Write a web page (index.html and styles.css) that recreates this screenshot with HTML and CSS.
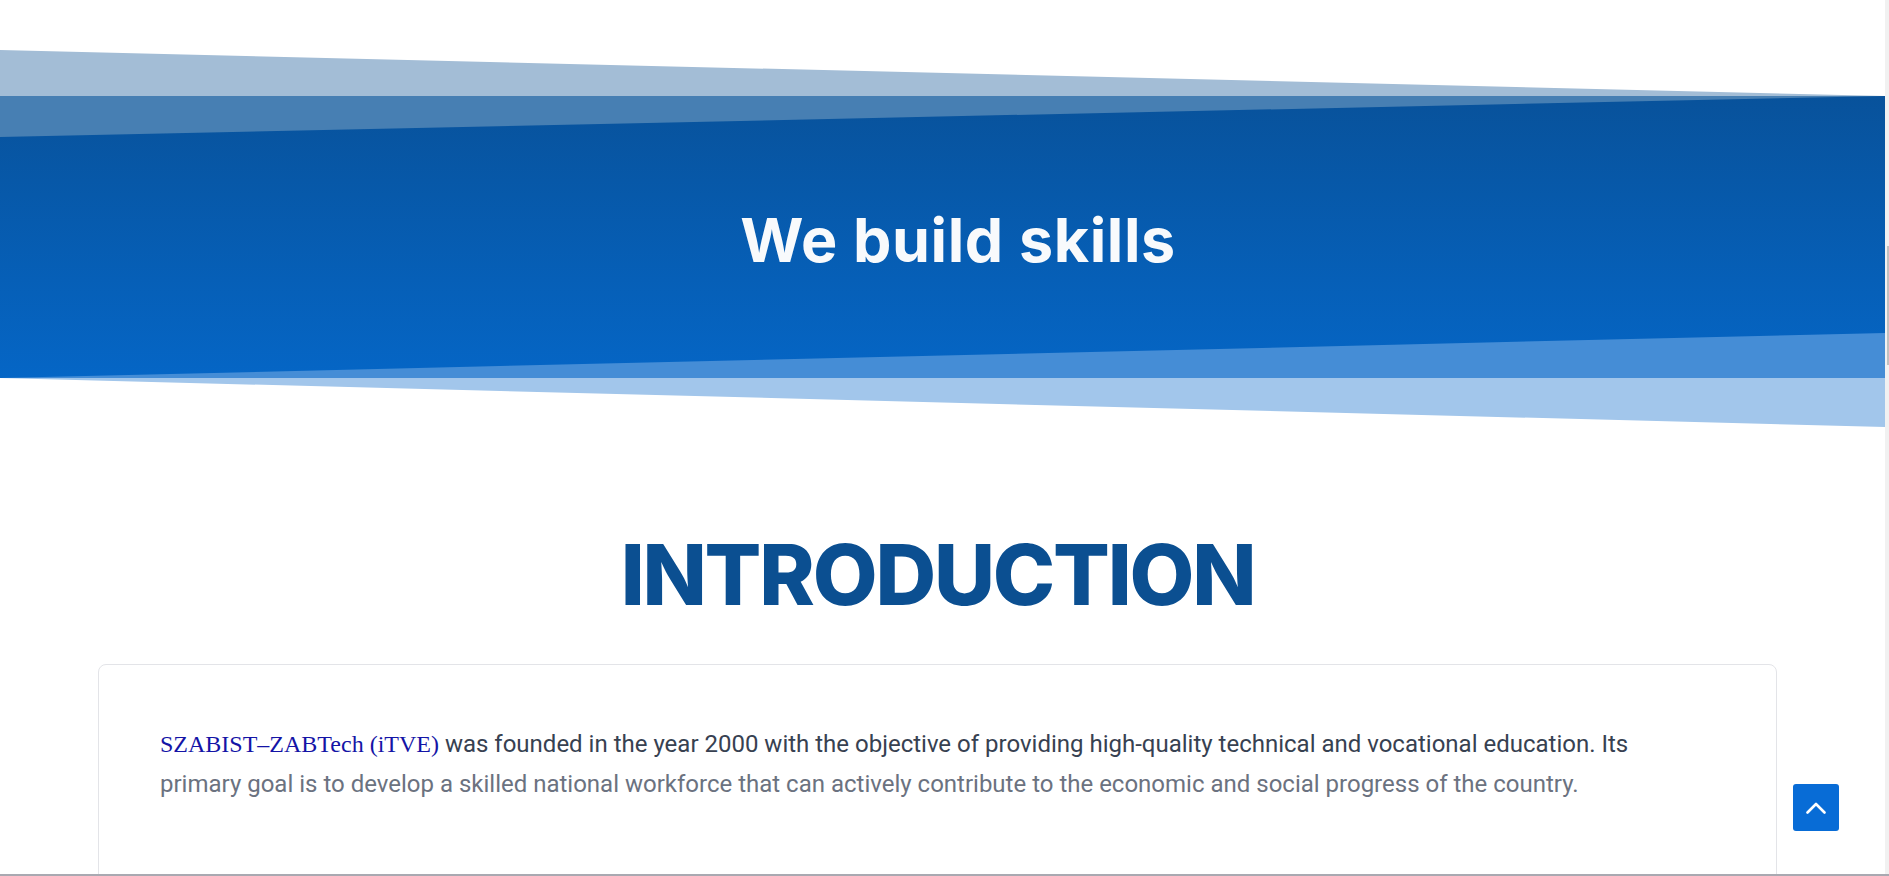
FILE: index.html
```html
<!DOCTYPE html>
<html lang="en">
<head>
<meta charset="utf-8">
<title>We build skills</title>
<link rel="stylesheet" href="styles.css">
</head>
<body>
<div class="page">
  <section class="hero">
    <svg class="divider divider-top" viewBox="0 0 1885 87" preserveAspectRatio="none" aria-hidden="true">
      <polygon points="0,0 1885,46 0,46" fill="#a3bdd6"/>
      <polygon points="0,46 1885,46 0,87" fill="#477fb3"/>
    </svg>
    <h1 class="hero-title">We build skills</h1>
    <svg class="divider divider-bottom" viewBox="0 0 1885 94" preserveAspectRatio="none" aria-hidden="true">
      <polygon points="0,45 1885,0 1885,45" fill="#458dd6"/>
      <polygon points="0,45 1885,45 1885,94" fill="#a2c6eb"/>
    </svg>
  </section>

  <section class="intro">
    <h2 class="intro-title">INTRODUCTION</h2>
    <div class="card">
      <p class="card-text"><span class="brand">SZABIST–ZABTech (iTVE)</span> was founded in the year 2000 with the objective of providing high-quality technical and vocational education. Its primary goal is to develop a skilled national workforce that can actively contribute to the economic and social progress of the country.</p>
    </div>
  </section>
</div>

<a class="to-top" href="#" aria-label="Back to top">
  <svg viewBox="0 0 20 12" width="20" height="12" aria-hidden="true">
    <polyline points="1.5,10.5 10,2 18.5,10.5" fill="none" stroke="#fff" stroke-width="2.6" stroke-linecap="round" stroke-linejoin="round"/>
  </svg>
</a>

<div class="scrollbar" aria-hidden="true"><div class="scrollbar-thumb"></div></div>
<div class="bottom-edge" aria-hidden="true"></div>
</body>
</html>
```

FILE: styles.css
```css
html, body {
  margin: 0;
  padding: 0;
  overflow: hidden;
  background: #ffffff;
}

body {
  font-family: Roboto, "Liberation Sans", Arial, sans-serif;
}

.page {
  margin-right: 4px;
}

.hero {
  position: relative;
  margin-top: 96px;
  height: 282px;
  background: linear-gradient(180deg, #08529b 0%, #0566c6 100%);
  display: flex;
  align-items: center;
  justify-content: center;
  padding-left: 31px;
  box-sizing: border-box;
}

.divider {
  position: absolute;
  left: 0;
  width: 100%;
  display: block;
}

.divider-top {
  top: -46px;
  height: 87px;
}

.divider-bottom {
  top: 237px;
  height: 94px;
}

.hero-title {
  position: relative;
  margin: 8px 0 0 0;
  font-family: Inter, "Open Sans", sans-serif;
  font-weight: 700;
  font-size: 61px;
  letter-spacing: 0.6px;
  color: #f8fafc;
  line-height: 1.2;
}

.intro {
  padding: 0 108px 0 98px;
  margin-top: 147px;
}

.intro-title {
  margin: 0;
  text-align: center;
  font-family: Inter, "Open Sans", sans-serif;
  font-weight: 800;
  font-size: 84px;
  letter-spacing: -2.2px;
  line-height: 1.2;
  color: #0b4f91;
}

.card {
  margin-top: 38px;
  border: 1px solid #e3e4e8;
  border-radius: 8px;
  padding: 59px 80px 120px 61px;
  background: #ffffff;
}

.card-text {
  margin: 0;
  font-size: 24px;
  line-height: 40px;
  color: #6b7280;
}

.card-text::first-line {
  color: #374151;
}

.brand {
  font-family: "Liberation Serif", "Times New Roman", serif;
  color: #1414a6;
}

.to-top {
  position: fixed;
  right: 50px;
  bottom: 45px;
  width: 46px;
  height: 47px;
  border-radius: 3px;
  background: #086cd6;
  display: flex;
  align-items: center;
  justify-content: center;
}

.scrollbar {
  position: fixed;
  top: 0;
  right: 0;
  width: 4px;
  height: 100%;
  background: #f1f1f1;
}

.scrollbar-thumb {
  margin-top: 246px;
  margin-left: 2px;
  width: 2px;
  height: 119px;
  background: #c1c1c1;
}

.bottom-edge {
  position: fixed;
  left: 0;
  right: 0;
  bottom: 0;
  height: 2px;
  background: #a9a9b1;
}
```
